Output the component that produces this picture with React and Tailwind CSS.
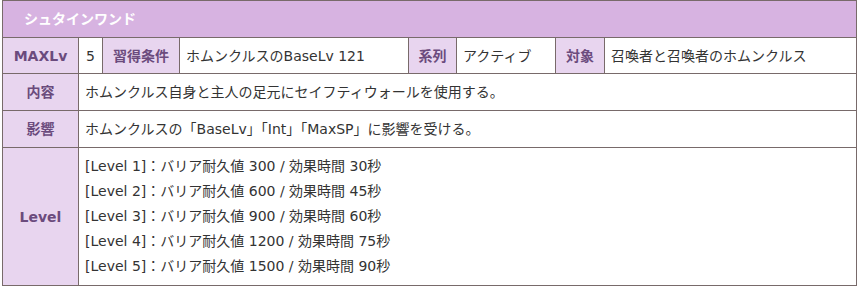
import React from 'react';

const levels = [
  { lv: 1, hp: 300, sec: 30 },
  { lv: 2, hp: 600, sec: 45 },
  { lv: 3, hp: 900, sec: 60 },
  { lv: 4, hp: 1200, sec: 75 },
  { lv: 5, hp: 1500, sec: 90 },
];

const label = 'border border-[#786a6a] bg-[#e8d5ef] text-[#6b4b7d] font-bold text-center align-middle';
const cell = 'border border-[#786a6a] bg-white text-[#333] text-left align-middle px-[6px]';

export default function App() {
  return (
    <div className="bg-white pl-[2px] pt-0 w-[859px] h-[288px]" style={{ fontFamily: '"DejaVu Sans", "Noto Sans CJK JP", sans-serif' }}>
      <table className="border-collapse table-fixed w-[854px] text-[14px] leading-[20px]">
        <colgroup>
          <col className="w-[76px]" />
          <col className="w-[24px]" />
          <col className="w-[77px]" />
          <col className="w-[229px]" />
          <col className="w-[48px]" />
          <col className="w-[99px]" />
          <col className="w-[49px]" />
          <col className="w-[252px]" />
        </colgroup>
        <tbody>
          <tr className="h-[37px]">
            <th colSpan={8} className="border border-[#786a6a] bg-[#d7b3e1] text-white font-bold text-left pl-[21px]">
              シュタインワンド
            </th>
          </tr>
          <tr className="h-[36px]">
            <th className={label}>MAXLv</th>
            <td className="border border-[#786a6a] bg-white text-[#333] text-center">5</td>
            <th className={label}>習得条件</th>
            <td className={cell}>ホムンクルスのBaseLv 121</td>
            <th className={label}>系列</th>
            <td className={cell}>アクティブ</td>
            <th className={label}>対象</th>
            <td className={cell}>召喚者と召喚者のホムンクルス</td>
          </tr>
          <tr className="h-[37px]">
            <th className={label}>内容</th>
            <td colSpan={7} className={cell}>ホムンクルス自身と主人の足元にセイフティウォールを使用する。</td>
          </tr>
          <tr className="h-[37px]">
            <th className={label}>影響</th>
            <td colSpan={7} className={cell}>ホムンクルスの「BaseLv」「Int」「MaxSP」に影響を受ける。</td>
          </tr>
          <tr>
            <th className={label}>Level</th>
            <td colSpan={7} className={`${cell} py-[6px]`}>
              {levels.map(l => (
                <div key={l.lv} className="leading-[25px]">
                  [Level {l.lv}]：バリア耐久値 {l.hp} / 効果時間 {l.sec}秒
                </div>
              ))}
            </td>
          </tr>
        </tbody>
      </table>
    </div>
  );
}
